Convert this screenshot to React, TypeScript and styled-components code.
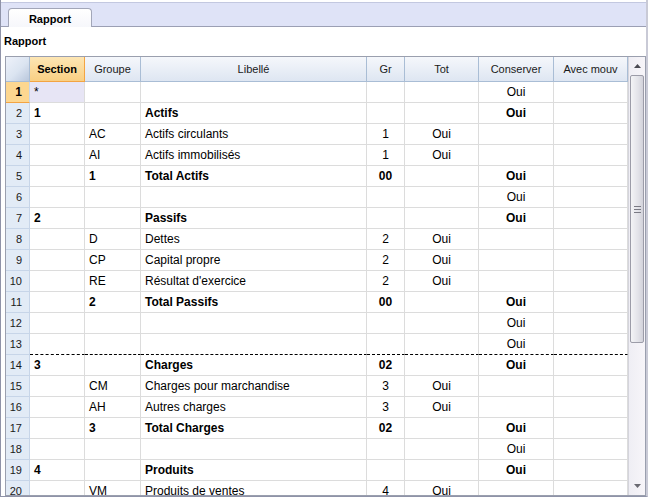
import React from "react";
import styled, { createGlobalStyle, css } from "styled-components";

const GlobalStyle = createGlobalStyle`
  html, body {
    margin: 0;
    padding: 0;
    background: #ffffff;
  }
  body {
    font-family: "Liberation Sans", Arial, sans-serif;
    font-size: 12px;
    color: #000;
  }
`;

interface Row {
  section?: string;
  groupe?: string;
  libelle?: string;
  gr?: string;
  tot?: string;
  conserver?: string;
  bold?: boolean;
  pageBreak?: boolean;
}

const rows: Row[] = [
  { section: "*", conserver: "Oui" },
  { section: "1", libelle: "Actifs", conserver: "Oui", bold: true },
  { groupe: "AC", libelle: "Actifs circulants", gr: "1", tot: "Oui" },
  { groupe: "AI", libelle: "Actifs immobilisés", gr: "1", tot: "Oui" },
  { groupe: "1", libelle: "Total Actifs", gr: "00", conserver: "Oui", bold: true },
  { conserver: "Oui" },
  { section: "2", libelle: "Passifs", conserver: "Oui", bold: true },
  { groupe: "D", libelle: "Dettes", gr: "2", tot: "Oui" },
  { groupe: "CP", libelle: "Capital propre", gr: "2", tot: "Oui" },
  { groupe: "RE", libelle: "Résultat d'exercice", gr: "2", tot: "Oui" },
  { groupe: "2", libelle: "Total Passifs", gr: "00", conserver: "Oui", bold: true },
  { conserver: "Oui" },
  { conserver: "Oui" },
  { section: "3", libelle: "Charges", gr: "02", conserver: "Oui", bold: true, pageBreak: true },
  { groupe: "CM", libelle: "Charges pour marchandise", gr: "3", tot: "Oui" },
  { groupe: "AH", libelle: "Autres charges", gr: "3", tot: "Oui" },
  { groupe: "3", libelle: "Total Charges", gr: "02", conserver: "Oui", bold: true },
  { conserver: "Oui" },
  { section: "4", libelle: "Produits", conserver: "Oui", bold: true },
  { groupe: "VM", libelle: "Produits de ventes", gr: "4", tot: "Oui" },
];

const columns = [
  { key: "section", label: "Section", width: 55, align: "left" },
  { key: "groupe", label: "Groupe", width: 56, align: "left" },
  { key: "libelle", label: "Libellé", width: 226, align: "left" },
  { key: "gr", label: "Gr", width: 38, align: "center" },
  { key: "tot", label: "Tot", width: 74, align: "center" },
  { key: "conserver", label: "Conserver", width: 75, align: "center" },
  { key: "avec", label: "Avec mouv", width: 74, align: "center" },
] as const;

const Window = styled.div`
  width: 648px;
  height: 497px;
  box-sizing: border-box;
  display: flex;
  flex-direction: column;
  border-left: 1px solid #8f93a8;
  border-right: 2px solid #c9cad6;
  border-bottom: 1px solid #8f93a8;
  overflow: hidden;
  background: #fff;
`;

const TabStrip = styled.div`
  height: 27px;
  flex-shrink: 0;
  box-sizing: border-box;
  border-top: 2px solid #ffffff;
  background: #dfe3f7;
  border-bottom: 1px solid #9b9fb4;
  display: flex;
  align-items: flex-end;
  padding-left: 7px;
  box-shadow: inset 0 1px 0 #c3c8e0;
`;

const Tab = styled.div`
  width: 84px;
  height: 19px;
  margin-bottom: -1px;
  box-sizing: border-box;
  border: 1px solid #a2a6b8;
  border-bottom: none;
  border-radius: 4px 4px 0 0;
  background: linear-gradient(#ffffff, #f6f7fb);
  font-weight: bold;
  font-size: 11px;
  display: flex;
  align-items: center;
  justify-content: center;
  padding-top: 1px;
`;

const Body = styled.div`
  flex: 1;
  display: flex;
  flex-direction: column;
  padding: 0 0 0 4px;
  min-height: 0;
`;

const Title = styled.div`
  height: 29px;
  flex-shrink: 0;
  box-sizing: border-box;
  padding-top: 8px;
  margin-left: -1px;
  font-weight: bold;
  font-size: 11px;
`;

const Grid = styled.div`
  flex: 1;
  min-height: 0;
  display: flex;
  border: 1px solid #9a9fae;
  overflow: hidden;
`;

const TableArea = styled.div`
  width: 622px;
  flex-shrink: 0;
  overflow: hidden;
`;

const Table = styled.table`
  border-collapse: separate;
  border-spacing: 0;
  table-layout: fixed;
  width: 622px;
`;

const HeadCell = styled.th<{ $active?: boolean }>`
  height: 24px;
  padding: 0;
  font-weight: normal;
  font-size: 11px;
  color: #1a1a1a;
  text-align: center;
  white-space: nowrap;
  overflow: hidden;
  background: linear-gradient(#f5f7fb, #dee6f2);
  border-right: 1px solid #a9bdd5;
  border-bottom: 1px solid #a9bdd5;
  ${(p) =>
    p.$active &&
    css`
      background: linear-gradient(#fde6b4, #f9cf83);
      border-right: 1px solid #f3a442;
      border-bottom: 1px solid #f3a442;
      font-weight: bold;
      color: #000;
    `}
`;

const Corner = styled.th`
  width: 24px;
  height: 24px;
  padding: 0;
  background: linear-gradient(135deg, #eef2fa 0%, #dbe4f1 55%, #b9c7dc 100%);
  border-right: 1px solid #a9bdd5;
  border-bottom: 1px solid #a9bdd5;
`;

const RowNum = styled.td<{ $active?: boolean }>`
  height: 20px;
  padding: 0 7px 0 0;
  text-align: right;
  font-size: 11px;
  color: #1a1a1a;
  background: #e2ebf6;
  border-right: 1px solid #c7d5e8;
  border-bottom: 1px solid #c7d5e8;
  ${(p) =>
    p.$active &&
    css`
      background: #fdd790;
      border-bottom: 1px solid #f3a442;
      font-weight: bold;
      font-size: 12px;
      color: #000;
    `}
`;

const Cell = styled.td<{
  $align: string;
  $bold?: boolean;
  $current?: boolean;
  $dashed?: boolean;
}>`
  height: 20px;
  padding: 0 4px;
  text-align: ${(p) => p.$align};
  font-size: 12px;
  font-weight: ${(p) => (p.$bold ? "bold" : "normal")};
  white-space: nowrap;
  overflow: hidden;
  border-right: 1px solid #dcdcdc;
  border-bottom: 1px solid #dcdcdc;
  background: ${(p) => (p.$current ? "#e7e5f5" : "#ffffff")};
  ${(p) =>
    p.$dashed &&
    css`
      border-bottom: 1px dashed #000;
    `}
`;

const Scrollbar = styled.div`
  width: 16px;
  flex-shrink: 0;
  display: flex;
  flex-direction: column;
  background: linear-gradient(90deg, #efeef4, #f7f5f9);
  border-left: 1px solid #d4d4dc;
`;

const Arrow = styled.div`
  height: 18px;
  flex-shrink: 0;
  display: flex;
  align-items: center;
  justify-content: center;
`;

const Thumb = styled.div`
  height: 268px;
  flex-shrink: 0;
  margin: 0 1px;
  box-sizing: border-box;
  border: 1px solid #9c9ca8;
  border-radius: 2px;
  background: linear-gradient(90deg, #f4f4f6, #e2e2e8 60%, #d2d2da);
  display: flex;
  align-items: center;
  justify-content: center;
`;

const Track = styled.div`
  flex: 1;
`;

function ArrowIcon({ down }: { down?: boolean }) {
  return (
    <svg width="7" height="4" viewBox="0 0 7 4">
      <path
        d={down ? "M0 0 H7 L3.5 4 Z" : "M3.5 0 L7 4 H0 Z"}
        fill={down ? "#6a6a72" : "#4a4a52"}
      />
    </svg>
  );
}

function Grip() {
  return (
    <svg width="7" height="7" viewBox="0 0 7 7">
      <path d="M0 0.5 H7 M0 3.5 H7 M0 6.5 H7" stroke="#7a7a84" strokeWidth="1" />
    </svg>
  );
}

export default function App() {
  return (
    <>
      <GlobalStyle />
      <Window>
        <TabStrip>
          <Tab>Rapport</Tab>
        </TabStrip>
        <Body>
          <Title>Rapport</Title>
          <Grid>
            <TableArea>
              <Table>
                <colgroup>
                  <col style={{ width: 24 }} />
                  {columns.map((c) => (
                    <col key={c.key} style={{ width: c.width }} />
                  ))}
                </colgroup>
                <thead>
                  <tr>
                    <Corner />
                    {columns.map((c) => (
                      <HeadCell key={c.key} $active={c.key === "section"}>
                        {c.label}
                      </HeadCell>
                    ))}
                  </tr>
                </thead>
                <tbody>
                  {rows.map((row, idx) => {
                    const next = rows[idx + 1];
                    const dashed = !!next?.pageBreak;
                    return (
                      <tr key={idx}>
                        <RowNum $active={idx === 0}>{idx + 1}</RowNum>
                        {columns.map((c) => (
                          <Cell
                            key={c.key}
                            $align={c.align}
                            $bold={row.bold}
                            $current={idx === 0 && c.key === "section"}
                            $dashed={dashed}
                          >
                            {(row as Record<string, any>)[c.key] ?? ""}
                          </Cell>
                        ))}
                      </tr>
                    );
                  })}
                </tbody>
              </Table>
            </TableArea>
            <Scrollbar>
              <Arrow>
                <ArrowIcon />
              </Arrow>
              <Thumb>
                <Grip />
              </Thumb>
              <Track />
              <Arrow>
                <ArrowIcon down />
              </Arrow>
            </Scrollbar>
          </Grid>
        </Body>
      </Window>
    </>
  );
}
